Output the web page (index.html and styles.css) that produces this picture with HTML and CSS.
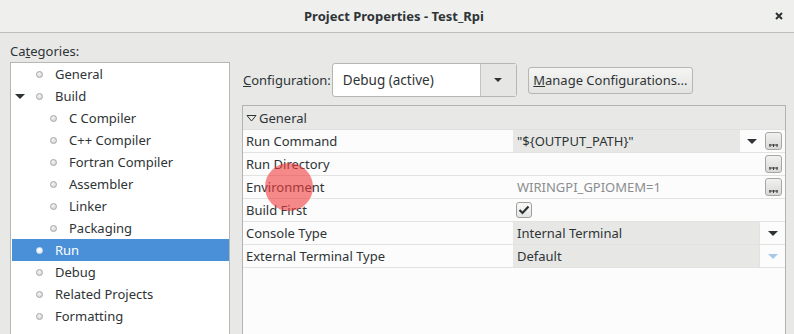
FILE: index.html
```html
<!DOCTYPE html>
<html lang="en">
<head>
  <meta charset="UTF-8" />
  <title>Project Properties - Test_Rpi</title>
  <link rel="stylesheet" href="styles.css">
</head>
<body>
  <div class="window">
    <header class="titlebar">
      <span></span>
      <span class="title">Project Properties - Test_Rpi</span>
      <span class="close">
        <svg width="8" height="8" viewBox="0 0 8 8"><path d="M1 1L7 7M7 1L1 7" stroke="#2e3436" stroke-width="2"/></svg>
      </span>
    </header>

    <main class="content">
      <section class="categories">
        <div class="caption">Ca<u>t</u>egories:</div>
        <ul class="tree">
          <li><span class="lead"></span><span class="bullet"></span>General</li>
          <li><span class="lead"><i class="expander"></i></span><span class="bullet"></span>Build</li>
          <li class="child"><span class="lead"></span><span class="bullet"></span>C Compiler</li>
          <li class="child"><span class="lead"></span><span class="bullet"></span>C++ Compiler</li>
          <li class="child"><span class="lead"></span><span class="bullet"></span>Fortran Compiler</li>
          <li class="child"><span class="lead"></span><span class="bullet"></span>Assembler</li>
          <li class="child"><span class="lead"></span><span class="bullet"></span>Linker</li>
          <li class="child"><span class="lead"></span><span class="bullet"></span>Packaging</li>
          <li class="selected"><span class="lead"></span><span class="bullet"></span>Run</li>
          <li><span class="lead"></span><span class="bullet"></span>Debug</li>
          <li><span class="lead"></span><span class="bullet"></span>Related Projects</li>
          <li><span class="lead"></span><span class="bullet"></span>Formatting</li>
        </ul>
      </section>

      <section class="settings">
        <div class="toolbar">
          <span class="config-label"><u>C</u>onfiguration:</span>
          <div class="combo">
            <span class="combo-text">Debug (active)</span>
            <span class="combo-btn"><i class="arrow"></i></span>
          </div>
          <button class="btn"><u>M</u>anage Configurations...</button>
        </div>

        <div class="sheet">
          <div class="group">
            <svg width="11" height="8" viewBox="0 0 11 8"><path d="M1 1.5H10L5.5 7Z" fill="none" stroke="#2e3436" stroke-width="1"/></svg>
            General
          </div>

          <div class="prop">
            <div class="name">Run Command</div>
            <div class="value">
              <span class="field filled">"${OUTPUT_PATH}"</span>
              <span class="drop"><i class="arrow big"></i></span>
              <span class="more"><span class="dots"><svg width="9" height="3" viewBox="0 0 9 3"><path d="M0 1H9M1 0V3M4.5 0V3M8 0V3" stroke="#3a3d3e" stroke-width="1"/></svg></span></span>
            </div>
          </div>
          <div class="prop">
            <div class="name">Run Directory</div>
            <div class="value">
              <span class="field"></span>
              <span class="more"><span class="dots"><svg width="9" height="3" viewBox="0 0 9 3"><path d="M0 1H9M1 0V3M4.5 0V3M8 0V3" stroke="#3a3d3e" stroke-width="1"/></svg></span></span>
            </div>
          </div>
          <div class="prop">
            <div class="name">Environment</div>
            <div class="value">
              <span class="field dim">WIRINGPI_GPIOMEM=1</span>
              <span class="more"><span class="dots"><svg width="9" height="3" viewBox="0 0 9 3"><path d="M0 1H9M1 0V3M4.5 0V3M8 0V3" stroke="#3a3d3e" stroke-width="1"/></svg></span></span>
            </div>
          </div>
          <div class="prop">
            <div class="name">Build First</div>
            <div class="value">
              <span class="check">
                <svg width="12" height="10" viewBox="0 0 12 10"><path d="M1.5 5L4.5 8L10.5 1.5" fill="none" stroke="#2e3436" stroke-width="2.2"/></svg>
              </span>
            </div>
          </div>
          <div class="prop">
            <div class="name">Console Type</div>
            <div class="value">
              <span class="field filled">Internal Terminal</span>
              <span class="drop wide"><i class="arrow big"></i></span>
            </div>
          </div>
          <div class="prop">
            <div class="name">External Terminal Type</div>
            <div class="value">
              <span class="field filled">Default</span>
              <span class="drop wide"><i class="arrow big off"></i></span>
            </div>
          </div>
        </div>
      </section>
    </main>

    <div class="touch"></div>
  </div>
</body>
</html>
```

FILE: styles.css
```css
* {
  box-sizing: border-box;
}

body {
  margin: 0;
  width: 794px;
  height: 334px;
  overflow: hidden;
  background-color: #e8e8e7;
  font-family: 'Noto Sans', sans-serif;
  font-size: 13px;
  color: #2e3436;
}

.window {
  position: relative;
  height: 100%;
  overflow: hidden;
}

.titlebar {
  height: 33px;
  background-color: #efefee;
  border-bottom: 1px solid #bdbdbb;
  display: grid;
  grid-template-columns: 1fr auto 1fr;
  align-items: center;
}

.title {
  font-weight: bold;
  margin-right: 6px;
}

.close {
  justify-self: end;
  display: flex;
  padding-right: 11px;
}

.content {
  display: grid;
  grid-template-columns: 220px 1fr;
  column-gap: 12px;
  padding: 10px 8px 0 10px;
}

.caption {
  line-height: 17px;
  margin-bottom: 2px;
}

/* Category tree */
.tree {
  list-style: none;
  margin: 0;
  padding: 0 0 0 1px;
  height: 273px;
  background-color: #fff;
  border: 1px solid #b6b6b3;
}

.tree li {
  display: flex;
  align-items: center;
  height: 22px;
  line-height: 22px;
}

.tree li.child {
  padding-left: 14px;
}

.tree li.selected {
  background-color: #4a90d9;
  color: #fff;
}

.lead {
  width: 24px;
  display: flex;
  align-items: center;
  padding-left: 3px;
}

.expander {
  width: 0;
  height: 0;
  border-left: 5px solid transparent;
  border-right: 5px solid transparent;
  border-top: 5px solid #2e3436;
}

.bullet {
  width: 7px;
  height: 7px;
  margin-right: 12px;
  border-radius: 50%;
  border: 1px solid #a5a5a3;
  background: radial-gradient(circle at 40% 35%, #f4f4f4, #cfcfcd);
}

.selected .bullet {
  border-color: #dfe8f3;
  background: radial-gradient(circle at 40% 35%, #ffffff, #e4e4e4);
}

/* Configuration toolbar */
.toolbar {
  display: flex;
  align-items: center;
  height: 34px;
  margin-top: 20px;
}

.config-label {
  padding-left: 1px;
  margin-right: 1px;
}

.combo {
  display: flex;
  width: 185px;
  height: 34px;
  background-color: #fff;
  border: 1px solid #b6b6b3;
  border-radius: 3px;
}

.combo-text {
  flex: 1;
  padding-left: 10px;
  line-height: 32px;
  font-size: 13.5px;
}

.combo-btn {
  width: 36px;
  display: flex;
  align-items: center;
  justify-content: center;
  background-color: #e6e6e5;
  border-left: 1px solid #c4c4c2;
}

.arrow {
  width: 0;
  height: 0;
  border-left: 4px solid transparent;
  border-right: 4px solid transparent;
  border-top: 4px solid #2e3436;
}

.arrow.big {
  border-left-width: 5px;
  border-right-width: 5px;
  border-top-width: 5px;
}

.arrow.off {
  border-top-color: #a8c8ea;
}

.btn {
  margin-left: 11px;
  width: 165px;
  height: 27px;
  padding: 0;
  font: inherit;
  color: inherit;
  border: 1px solid #b6b6b3;
  border-radius: 3px;
  background: linear-gradient(#f5f5f4, #e3e3e1);
}

/* Property sheet */
.sheet {
  margin-top: 8px;
  height: 230px;
  background-color: #fcfcfc;
  border: 1px solid #b3b3b0;
}

.group {
  display: flex;
  align-items: center;
  gap: 2px;
  height: 24px;
  padding-left: 3px;
  background-color: #e8e8e7;
  border-bottom: 1px solid #e0e0de;
}

.prop {
  display: grid;
  grid-template-columns: 270px 1fr;
  height: 23px;
  border-bottom: 1px solid #e2e2e0;
}

.name {
  padding-left: 3px;
  line-height: 22px;
}

.value {
  display: flex;
}

.field {
  flex: 1;
  padding-left: 4px;
  line-height: 22px;
}

.field.filled {
  background-color: #e7e8e6;
}

.field.dim {
  color: #8b8e8f;
}

.drop {
  width: 23px;
  display: flex;
  align-items: center;
  justify-content: center;
  background-color: #fcfcfc;
}

.drop.wide {
  width: 26px;
  border-left: 1px solid #e2e2e0;
}

.more {
  width: 22px;
  padding: 2px 3px 2px 2px;
  display: flex;
}

.dots {
  width: 17px;
  height: 18px;
  display: flex;
  align-items: flex-end;
  justify-content: center;
  padding-bottom: 2px;
  border: 1px solid #a6a6a4;
  border-radius: 3px;
  background: linear-gradient(#f1f1f0, #d9d9d7);
}

.check {
  width: 16px;
  height: 16px;
  margin: 3px 0 0 3px;
  display: flex;
  align-items: center;
  justify-content: center;
  border: 1px solid #9e9e9b;
  border-radius: 3px;
  background: linear-gradient(#fbfbfb, #e4e4e2);
}

/* Click marker */
.touch {
  position: absolute;
  left: 265px;
  top: 163px;
  width: 48px;
  height: 48px;
  border-radius: 50%;
  background-color: rgba(240, 60, 60, 0.6);
}
```
